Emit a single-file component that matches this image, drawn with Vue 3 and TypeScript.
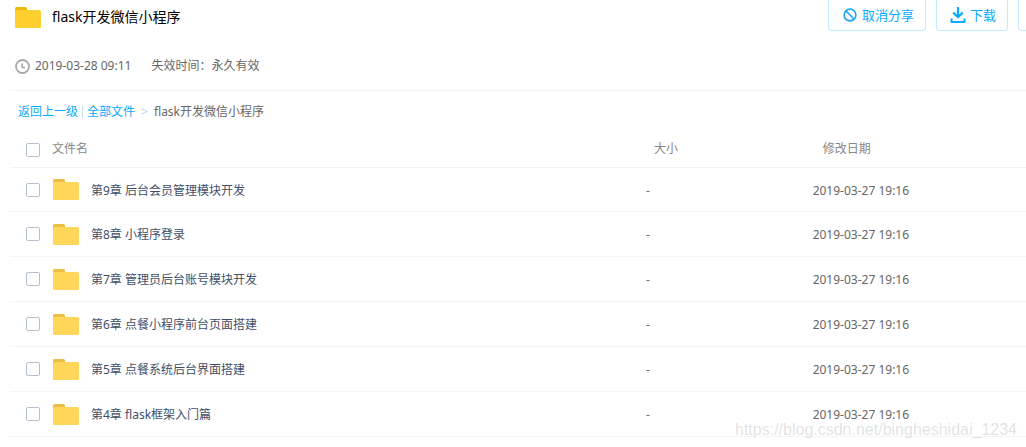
<script setup lang="ts">
import { ref } from 'vue'

interface FileRow {
  name: string
  size: string
  date: string
  checked: boolean
}

const files = ref<FileRow[]>(
  [
    '第9章 后台会员管理模块开发',
    '第8章 小程序登录',
    '第7章 管理员后台账号模块开发',
    '第6章 点餐小程序前台页面搭建',
    '第5章 点餐系统后台界面搭建',
    '第4章 flask框架入门篇',
  ].map((name) => ({ name, size: '-', date: '2019-03-27 19:16', checked: false })),
)

const allChecked = ref(false)
function toggleAll() {
  files.value.forEach((f) => (f.checked = allChecked.value))
}
</script>

<template>
  <main class="page">
    <header class="top">
      <svg class="folder" viewBox="0 0 26 21" aria-hidden="true">
        <path d="M0 5V1.5Q0 0 1.5 0H10.5Q12 0 12 1.5V5Z" fill="#eeb80c" />
        <rect y="3" width="26" height="18" rx="1.5" fill="#ffcf30" />
      </svg>
      <h1 class="title">flask开发微信小程序</h1>
      <div class="actions">
        <button type="button" class="btn">
          <svg class="icon-ban" viewBox="0 0 14 14" aria-hidden="true">
            <circle cx="7" cy="7" r="5.9" fill="none" stroke="#1ea5f8" stroke-width="1.6" />
            <path d="M2.8 2.8L11.2 11.2" stroke="#1ea5f8" stroke-width="1.6" />
          </svg>
          取消分享
        </button>
        <button type="button" class="btn btn-download">
          <svg class="icon-down" viewBox="0 0 16 16" aria-hidden="true">
            <path d="M8 0V10M3.2 5.5L8 10.3L12.8 5.5" fill="none" stroke="#09aaff" stroke-width="2.2" />
            <path d="M1.5 11.5V15H14.5V11.5" fill="none" stroke="#09aaff" stroke-width="2" stroke-linejoin="round" />
          </svg>
          下载
        </button>
        <span class="btn-edge" aria-hidden="true"></span>
      </div>
    </header>

    <div class="meta">
      <svg class="clock" viewBox="0 0 15 15" aria-hidden="true">
        <circle cx="7.5" cy="7.5" r="6.5" fill="none" stroke="#a9a9a9" stroke-width="1.8" />
        <path d="M7.2 4.5V8.5H10" fill="none" stroke="#a3a3a3" stroke-width="1.5" />
      </svg>
      <span class="created">2019-03-28 09:11</span>
      <span>失效时间：永久有效</span>
    </div>

    <section class="list">
      <nav class="crumbs">
        <a href="#">返回上一级</a>
        <span class="bar"></span>
        <a href="#">全部文件</a>
        <span class="arrow">&gt;</span>
        <span>flask开发微信小程序</span>
      </nav>

      <table class="files">
        <colgroup>
          <col class="c-check" />
          <col />
          <col class="c-size" />
          <col class="c-date" />
        </colgroup>
        <thead>
          <tr>
            <th class="check">
              <input v-model="allChecked" type="checkbox" aria-label="文件名" @change="toggleAll" />
            </th>
            <th>文件名</th>
            <th class="h-size">大小</th>
            <th class="h-date">修改日期</th>
          </tr>
        </thead>
        <tbody>
          <tr v-for="(f, i) in files" :key="f.name">
            <td class="check">
              <input :id="'file-' + i" v-model="f.checked" type="checkbox" />
            </td>
            <td>
              <label class="name" :for="'file-' + i">
                <svg class="folder" viewBox="0 0 26 21" aria-hidden="true">
                  <path d="M0 5V1.5Q0 0 1.5 0H10.5Q12 0 12 1.5V5Z" fill="#ecbe48" />
                  <rect y="3" width="26" height="18" rx="1.5" fill="#ffd659" />
                </svg>
                <span class="text">{{ f.name }}</span>
              </label>
            </td>
            <td class="text">{{ f.size }}</td>
            <td class="text">{{ f.date }}</td>
          </tr>
        </tbody>
      </table>
    </section>

    <div class="watermark">https://blog.csdn.net/bingheshidai_1234</div>
  </main>
</template>

<style>
body {
  margin: 0;
  background: #fff;
}
</style>

<style scoped>
.page {
  position: relative;
  overflow: hidden;
  padding-bottom: 10px;
  color: #666;
  font: 12px/18px 'Noto Sans', 'Noto Sans CJK SC', sans-serif;
}
.top {
  display: flex;
  align-items: flex-start;
  padding-left: 15px;
}
.folder {
  display: block;
  flex: none;
  width: 26px;
  height: 21px;
}
.top .folder {
  margin-top: 7px;
}
.title {
  margin: 7px 0 0 11px;
  color: #000;
  font-size: 14px;
  font-weight: 400;
  line-height: 20px;
}
.actions {
  display: flex;
  gap: 10px;
  margin-left: auto;
}
.btn {
  display: flex;
  align-items: center;
  gap: 5px;
  height: 31px;
  padding: 0 11px 1px 14px;
  border: 1px solid #c3eaff;
  border-top: 0;
  border-radius: 0 0 4px 4px;
  background: #fff;
  color: #09aaff;
  font: inherit;
  font-size: 13px;
  line-height: 20px;
}
.btn-download {
  padding-left: 13px;
  gap: 4px;
}
.icon-ban {
  width: 14px;
  height: 14px;
}
.icon-down {
  width: 16px;
  height: 16px;
}
.btn-edge {
  box-sizing: border-box;
  width: 8px;
  height: 31px;
  border: 1px solid #c3eaff;
  border-width: 0 0 1px 1px;
  border-radius: 0 0 0 4px;
}
.meta {
  display: flex;
  align-items: center;
  padding: 26px 15px 15px;
}
.clock {
  width: 15px;
  height: 15px;
  margin-right: 5px;
}
.created {
  margin-right: 20px;
}
.list {
  margin-left: 10px;
  border-top: 1px solid #f3f3f5;
}
.crumbs {
  display: flex;
  align-items: center;
  box-sizing: border-box;
  height: 40px;
  padding: 2px 0 0 8px;
}
.crumbs a {
  color: #09aaff;
  text-decoration: none;
}
.bar {
  width: 1px;
  height: 12px;
  margin: 0 4px;
  background: #c5dcf5;
}
.arrow {
  margin: 0 6px;
  color: #b4d0f0;
}
.files {
  width: 100%;
  border-collapse: separate;
  border-spacing: 0;
  table-layout: fixed;
}
.c-check {
  width: 42px;
}
.c-size {
  width: 16.4%;
}
.c-date {
  width: 21%;
}
th,
td {
  box-sizing: border-box;
  height: 45px;
  padding: 0;
  border-bottom: 1px solid #f0f4fb;
  text-align: left;
  font-weight: 400;
}
tbody tr:first-child td {
  height: 44px;
}
th {
  height: 37px;
  border-color: #f3f3f5;
  color: #888;
}
.check {
  padding-left: 16px;
}
th.check {
  padding-top: 2px;
}
.text {
  padding-top: 2px;
}
.h-size {
  padding-left: 8px;
}
.h-date {
  padding-left: 10px;
}
input {
  display: block;
  box-sizing: border-box;
  width: 14px;
  height: 14px;
  margin: 0;
  appearance: none;
  border: 1px solid #b4c0d0;
  border-radius: 2px;
  background: #fff;
}
input:checked {
  background: #09aaff;
}
.name {
  display: flex;
  align-items: center;
  gap: 12px;
  padding-left: 1px;
  color: #424e67;
}
.watermark {
  position: absolute;
  right: 9px;
  bottom: 7px;
  color: rgba(120, 120, 120, 0.22);
  font: 16px/20px 'Liberation Sans', sans-serif;
  pointer-events: none;
}
</style>
